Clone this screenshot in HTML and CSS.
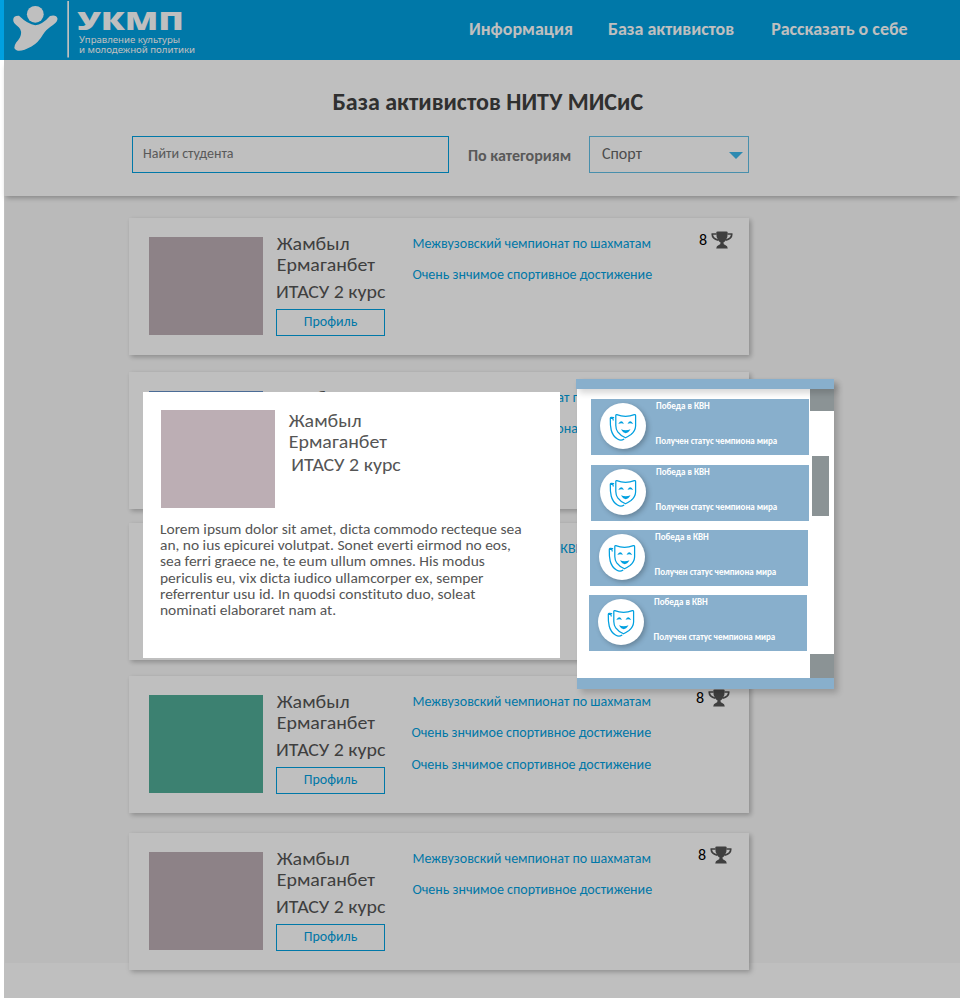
FILE: index.html
```
<!DOCTYPE html>
<html lang="ru">
<head>
<meta charset="utf-8">
<title>База активистов НИТУ МИСиС</title>
<link rel="stylesheet" href="styles.css">
</head>
<body>
<svg class="defs" width="0" height="0" aria-hidden="true">
  <symbol id="cup" viewBox="0 0 22 18">
    <path fill="#555" d="M5.300 1.600Q5.300.5 6.600.4H15.400Q16.700.5 16.700 1.600Q17 6 14.800 9.200Q13.600 10.900 12.400 11.500Q12.400 13.600 14.200 14Q16.600 14.600 16.800 17.400H5.200Q5.400 14.600 7.800 14Q9.600 13.600 9.600 11.500Q8.400 10.900 7.200 9.200Q5 6 5.300 1.600Z"/>
    <path fill="none" stroke="#555" stroke-width="1.700" d="M5.600 3H1.300Q.9 7.300 7.400 9.300M16.400 3H20.700Q21.100 7.300 14.600 9.300"/>
  </symbol>
  <symbol id="masks" viewBox="0 0 28 29">
    <g fill="none" stroke="#00a0e0" stroke-width="1.250" stroke-linejoin="round" stroke-linecap="round">
      <path d="M7.800 1.700Q16.500 5.200 25.400 1.700Q26.500 1.400 26.600 2.800V13Q26.400 18 22 21.500Q18.500 23.800 16.500 24.800Q11.500 22.500 8.500 18.500Q6.900 16 6.800 12.500V2.600Q6.900 1.500 7.800 1.700Z"/>
      <path d="M4.600 4.700Q1.300 3.600 1.300 5.500Q1.100 12 2.200 17Q3.600 23 8.500 26Q12 28.200 14.800 26.200M1.800 5.500Q4 4.900 4.200 7"/>
    </g>
    <path fill="#00a0e0" d="M9.300 11Q12 5.800 15 10.800Q12 9.800 9.300 11ZM18.500 10.800Q21.500 5.800 24.200 11Q21.300 9.800 18.500 10.800ZM12 16.300Q16.700 18.300 21.500 16.300Q16.700 24 12 16.300Z"/>
  </symbol>
</svg>

<div class="page">
  <header class="header">
    <svg class="logo" width="196" height="60" viewBox="0 0 196 60">
      <g fill="#fff">
        <circle cx="35.300" cy="14.300" r="8.400"/>
        <path d="M19 15.800Q13.300 15.500 13.200 20Q13.300 23 17 25.700Q21.700 29 21 34Q20.500 38 16.200 42.500Q12.200 48.500 17 50.500Q22 51.800 31.500 46.500Q38.500 42.500 43 34.500Q46 29.500 53 25Q57.800 21.500 57.500 18.500Q56.500 14.500 50 16Q42.500 24.500 35.300 25.300Q28 24.500 19 15.800Z"/>
        <rect x="67.300" y="1" width="1.700" height="56.500"/>
        <text class="logo-name" x="77" y="30" textLength="107" lengthAdjust="spacingAndGlyphs">УКМП</text>
        <text class="logo-sub" x="79" y="43" textLength="101" lengthAdjust="spacingAndGlyphs">Управление культуры</text>
        <text class="logo-sub" x="79" y="53" textLength="116" lengthAdjust="spacingAndGlyphs">и молодежной политики</text>
      </g>
    </svg>
    <nav class="nav">
      <a>Информация</a>
      <a>База активистов</a>
      <a>Рассказать о себе</a>
    </nav>
  </header>

  <section class="search">
    <h1 class="title">База активистов НИТУ МИСиС</h1>
    <div class="filters">
      <div class="field">Найти студента</div>
      <span class="label">По категориям</span>
      <div class="select"><span>Спорт</span><svg width="14" height="7" viewBox="0 0 14 7"><path fill="#3cb8ec" d="M0 0H14L7 7Z"/></svg></div>
    </div>
  </section>

  <main class="list">
    <article class="card">
      <div class="photo"></div>
      <div class="person"><p class="name">Жамбыл<br>Ермаганбет</p><p class="course">ИТАСУ 2 курс</p><a class="profile">Профиль</a></div>
      <div class="awards"><a>Межвузовский чемпионат по шахматам</a><a>Очень знчимое спортивное достижение</a></div>
      <div class="score"><span>8</span><svg width="22" height="18"><use href="#cup"/></svg></div>
    </article>
    <article class="card card-2">
      <div class="photo photo-blue"></div>
      <div class="person"><p class="name">Жамбыл</p></div>
      <div class="awards"><a>Межвузовский чемпионат по шахматам</a><a class="shift">Межвузовский чемпионат</a></div>
    </article>
    <article class="card card-3">
      <div class="photo"></div>
      <div class="person"></div>
      <div class="awards"><a class="kvn">Победа в КВН</a></div>
    </article>
    <article class="card card-4">
      <div class="photo photo-green"></div>
      <div class="person"><p class="name">Жамбыл<br>Ермаганбет</p><p class="course">ИТАСУ 2 курс</p><a class="profile">Профиль</a></div>
      <div class="awards"><a>Межвузовский чемпионат по шахматам</a><a>Очень знчимое спортивное достижение</a><a>Очень знчимое спортивное достижение</a></div>
      <div class="score"><span>8</span><svg width="22" height="18"><use href="#cup"/></svg></div>
    </article>
    <article class="card card-5">
      <div class="photo"></div>
      <div class="person"><p class="name">Жамбыл<br>Ермаганбет</p><p class="course">ИТАСУ 2 курс</p><a class="profile">Профиль</a></div>
      <div class="awards"><a>Межвузовский чемпионат по шахматам</a><a>Очень знчимое спортивное достижение</a></div>
      <div class="score"><span>8</span><svg width="22" height="18"><use href="#cup"/></svg></div>
    </article>
  </main>

  <div class="shade"></div>

  <section class="modal">
    <div class="modal-head">
      <div class="photo"></div>
      <div class="person"><p class="name">Жамбыл<br>Ермаганбет</p><p class="course">ИТАСУ 2 курс</p></div>
    </div>
    <p class="bio">Lorem ipsum dolor sit amet, dicta commodo recteque sea<br>an, no ius epicurei volutpat. Sonet everti eirmod no eos,<br>sea ferri graece ne, te eum ullum omnes. His modus<br>periculis eu, vix dicta iudico ullamcorper ex, semper<br>referrentur usu id. In quodsi constituto duo, soleat<br>nominati elaboraret nam at.</p>
  </section>

  <aside class="panel">
    <div class="panel-top"></div>
    <div class="panel-body">
      <div class="items">
        <div class="item"><span class="badge"><svg width="28" height="29"><use href="#masks"/></svg></span><div class="info"><b>Победа в КВН</b><b>Получен статус чемпиона мира</b></div></div>
        <div class="item"><span class="badge"><svg width="28" height="29"><use href="#masks"/></svg></span><div class="info"><b>Победа в КВН</b><b>Получен статус чемпиона мира</b></div></div>
        <div class="item item-3"><span class="badge"><svg width="28" height="29"><use href="#masks"/></svg></span><div class="info"><b>Победа в КВН</b><b>Получен статус чемпиона мира</b></div></div>
        <div class="item item-4"><span class="badge"><svg width="28" height="29"><use href="#masks"/></svg></span><div class="info"><b>Победа в КВН</b><b>Получен статус чемпиона мира</b></div></div>
      </div>
      <div class="scroll"><i class="up"></i><i class="thumb"></i><i class="down"></i></div>
    </div>
    <div class="panel-bottom"></div>
  </aside>
</div>
</body>
</html>
```

FILE: styles.css
```
* { box-sizing: border-box; }
body { margin: 0; background: #fff; font-family: Carlito, Lato, "Open Sans", sans-serif; font-variant-ligatures: none; color: #555; }
p, h1 { margin: 0; }
a { white-space: nowrap; }
svg { display: block; }
.defs { position: absolute; }
.page { position: relative; width: 960px; height: 1000px; overflow: hidden; display: flex; flex-direction: column; }

.header { height: 60px; flex: none; background: #00a0e0; display: flex; }
.logo-name { font: 800 25px "Open Sans", sans-serif; }
.logo-sub { font: 8.500px "Noto Sans", sans-serif; }
.nav { display: flex; gap: 35px; padding: 19px 0 0 273px; color: #fff; font-size: 18px; font-weight: 700; line-height: 20px; }
.nav a:last-child { margin-left: 2px; }

.search { height: 136px; flex: none; margin-left: 4px; background: #fff; box-shadow: 0 4px 5px -2px rgba(0,0,0,.28); position: relative; padding: 28px 0 0 128px; }
.title { padding-left: 200.500px; font-size: 24px; line-height: 28px; font-weight: 700; color: #404040; white-space: nowrap; }
.filters { display: flex; margin-top: 20px; }
.field { width: 317px; height: 37px; border: 1px solid #00a0e0; padding-left: 10px; font-size: 14px; line-height: 34px; color: #777; }
.label { width: 140px; padding-left: 19px; font-size: 16px; line-height: 40px; font-weight: 700; color: #777; white-space: nowrap; }
.select { width: 160px; height: 37px; border: 1px solid #60bfe6; padding: 0 5px 0 12px; display: flex; justify-content: space-between; align-items: center; font-size: 16px; line-height: 33px; color: #666; }
.select span { height: 35px; }
.select svg { margin-top: 2px; }

.list { height: 767px; flex: none; margin-left: 5px; padding: 22px 0 0 124px; background: #f9f9f9; }
.card { width: 620px; height: 137px; padding: 19px 0 0 20px; background: #fff; box-shadow: 2px 2px 5px rgba(0,0,0,.26); display: flex; position: relative; }
.card-2 { margin-top: 17px; }
.card-3 { margin-top: 14px; }
.card-4 { margin-top: 16px; }
.card-5 { margin-top: 20px; }
.photo { width: 114px; height: 98px; flex: none; background: #bcaeb4; }
.photo-blue { background: #6590c8; }
.photo-green { background: #51ad97; }
.person { width: 149.500px; flex: none; padding: 0 0 0 13px; font-size: 18px; line-height: 21px; white-space: nowrap; }
.name, .course, .bio { transform: scaleX(1.105); transform-origin: left; }
.name { padding-left: .7px; }
.card .name { margin-top: -3px; }
.person .course { margin-top: 6px; }
.profile { display: block; width: 109px; height: 27px; margin-top: 6px; border: 1px solid #00a0e0; color: #00a0e0; text-align: center; font-size: 14px; line-height: 24px; }
.awards { display: flex; flex-direction: column; width: 286.500px; flex: none; font-size: 14px; line-height: 13px; gap: 18px; color: #00a0e0; }
.shift { padding-left: 14px; }
.kvn { padding-left: 90px; }
.score { display: flex; align-items: flex-start; gap: 4px; margin-top: -6px; color: #000; font-size: 16px; line-height: 18px; }
.card-4 .score { margin: -6px 0 0 -3px; }
.card-4 a + a { margin-left: -1px; }
.card-4 a + a + a { margin-top: 1px; }
.card-5 .score { margin-left: -1px; }

.shade { position: absolute; left: 4px; top: 0; right: 0; bottom: 2px; background: rgba(0,0,0,.25); }

.modal { position: absolute; left: 143px; top: 392px; width: 417px; height: 266px; background: #fff; padding: 18px 0 0 18px; }
.modal-head { display: flex; }
.modal .name { margin-top: 1px; }
.modal .course { margin-top: 2px; padding-left: 3px; }
.bio { margin: 14px 0 0 -1px; font-size: 14px; line-height: 16.200px; letter-spacing: -.01px; white-space: nowrap; }

.panel { position: absolute; left: 577px; top: 379px; width: 257px; height: 310px; background: #fff; box-shadow: 4px 4px 6px rgba(0,0,0,.18); display: flex; flex-direction: column; }
.panel-top { height: 10px; flex: none; margin-left: -1px; background: #88afcc; box-shadow: 3px 4px 6px rgba(0,0,0,.16); position: relative; }
.panel-body { height: 289px; flex: none; display: flex; justify-content: space-between; }
.panel-bottom { height: 11px; flex: none; background: #88afcc; }
.items { width: 232px; padding: 10px 0 0 14px; display: flex; flex-direction: column; }
.item { width: 218px; height: 56px; margin-bottom: 10px; background: #88afcc; display: flex; padding: 4px 0 0 9px; flex: none; }
.item-3 { margin: -1px 0 9px -1px; }
.item-4 { margin-left: -2px; }
.badge { width: 46px; height: 46px; border-radius: 50%; background: #fff; box-shadow: 2px 2px 5px rgba(0,0,0,.25); padding: 10px 0 0 9px; }
.info { display: flex; flex-direction: column; justify-content: space-between; margin: -2px 0 9px 10px; font-size: 9px; line-height: 10px; color: #fff; white-space: nowrap; }
.info b + b { margin-left: -.5px; letter-spacing: -.03px; }
.scroll { width: 24px; display: flex; flex-direction: column; }
.scroll i { background: #8b9395; width: 24px; height: 24px; flex: none; }
.scroll .up { height: 22px; }
.scroll .thumb { width: 17px; height: 60px; margin: 45px 0 138px 2px; }
```
